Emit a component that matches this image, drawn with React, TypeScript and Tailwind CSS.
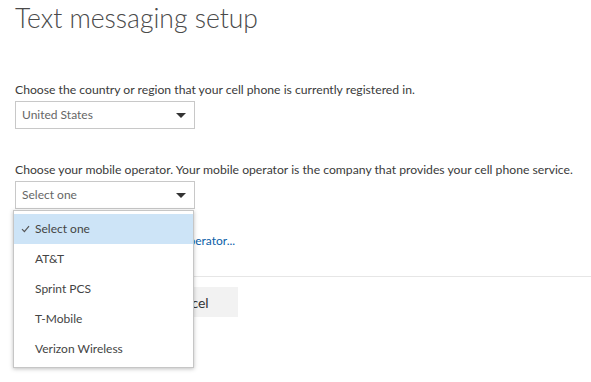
const operators = ["Select one", "AT&T", "Sprint PCS", "T-Mobile", "Verizon Wireless"];

function Caret() {
  return (
    <svg width="10" height="5" viewBox="0 0 10 5" className="shrink-0">
      <path d="M0 0 L10 0 L5 5 Z" fill="#333" />
    </svg>
  );
}

function Check() {
  return (
    <svg width="9" height="8" viewBox="0 0 9 8" className="shrink-0">
      <path d="M1 4.2 L3.4 6.6 L8 1.2" fill="none" stroke="#555" strokeWidth="1.2" />
    </svg>
  );
}

export default function App() {
  const selected = "Select one";

  return (
    <main
      className="w-[591px] h-[382px] overflow-hidden bg-white text-[#3a3a3a] pl-[15px]"
      style={{ fontFamily: "Lato, 'Open Sans', sans-serif" }}
    >
      <h1 className="pt-[2px] text-[26.5px] leading-[32px] font-light text-[#4a4a4a]">Text messaging setup</h1>

      <div className="mt-[48px] flex flex-col">
        <label className="text-[12.2px] leading-[16px]">
          Choose the country or region that your cell phone is currently registered in.
        </label>
        <div className="mt-[3px] w-[180px] h-[28px] border border-[#c8c8c8] flex items-center justify-between pl-[6px] pr-[8px]">
          <span className="text-[12px] text-[#666]">United States</span>
          <Caret />
        </div>
      </div>

      <div className="mt-[33px] flex flex-col">
        <label className="text-[12.2px] leading-[16px]">
          Choose your mobile operator. Your mobile operator is the company that provides your cell phone service.
        </label>
        <div className="relative mt-[3px]">
          <div className="w-[180px] h-[28px] border border-[#c8c8c8] flex items-center justify-between pl-[6px] pr-[8px]">
            <span className="text-[12px] text-[#666]">Select one</span>
            <Caret />
          </div>

          <ul className="absolute z-10 top-[29px] left-[-2px] w-[181px] bg-white border border-[#c6c6c6] shadow-[0_1px_4px_rgba(0,0,0,0.25)] py-[3px]">
            {operators.map((op) => (
              <li
                key={op}
                className={`h-[30px] flex items-center text-[12px] text-[#444] ${op === selected ? "bg-[#cde4f7]" : ""}`}
              >
                <span className="w-[21px] pl-[7px] flex items-center">{op === selected && <Check />}</span>
                <span>{op}</span>
              </li>
            ))}
          </ul>
        </div>

        <a className="mt-[24px] text-[12px] leading-[16px] text-[#0a5ea8] pl-[48px]">
          Can't find your mobile operator...
        </a>
      </div>

      <div className="mt-[27px] border-t border-[#e6e6e6]" />

      <div className="mt-[10px] flex gap-[8px]">
        <button className="w-[115px] h-[30px] bg-[#0072c6] text-white text-[14px]">Next</button>
        <button className="w-[100px] h-[30px] bg-[#f2f2f2] text-[#333] text-[14px]">Cancel</button>
      </div>
    </main>
  );
}
